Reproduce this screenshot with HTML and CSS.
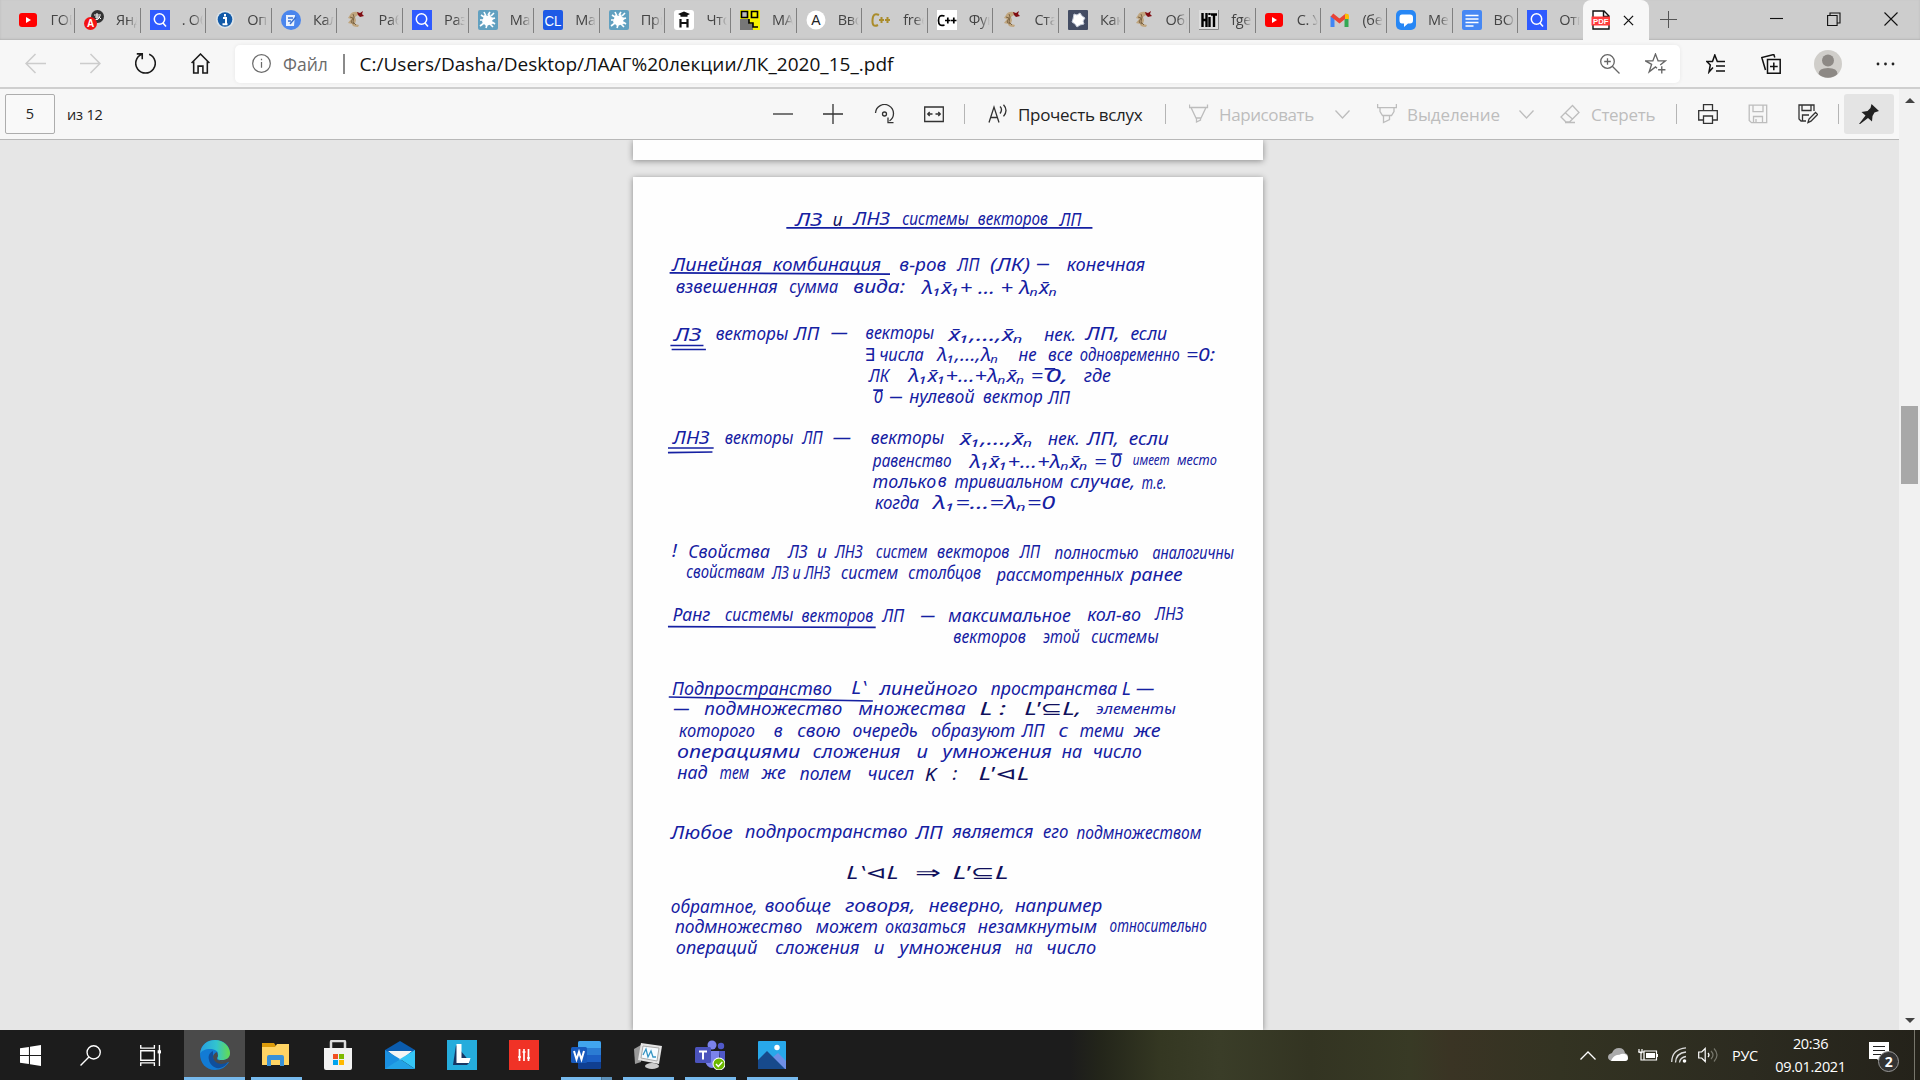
FILE: index.html
```html
<!DOCTYPE html>
<html lang="ru">
<head>
<meta charset="utf-8">
<title>ЛК_2020_15_.pdf</title>
<link rel="stylesheet" href="styles.css">
</head>
<body>
<svg class="defs" aria-hidden="true">
  <symbol id="yt" viewBox="0 0 20 20"><rect x="0" y="3" width="18" height="14" rx="3" fill="#f00"/><path d="M7 7l5 3-5 3z" fill="#fff"/></symbol>
  <symbol id="q" viewBox="0 0 20 20"><path fill="#2f5bff" d="M0 0h20v20H0z"/><circle cx="9.5" cy="9" r="5.2" fill="none" stroke="#fff" stroke-width="1.5"/><path d="M13 13l3 3.5" stroke="#fff" stroke-width="1.5"/></symbol>
  <symbol id="horse" viewBox="0 0 20 20"><path d="M12 2Q6 1 4 5L2 8l3 1-3 4 4 1q0 3 6 3l1-2-4-1 1-4-1-3 3-2z" fill="#c0a67f"/><path d="M4 7l3 1-2 4 3 2M7 4l1 3-1 5 3 3" fill="none" stroke="#7d6544"/><path d="M11 2l3 1 3-2-1 3 2 2-4 1-2-2z" fill="#800d12"/></symbol>
  <symbol id="splat" viewBox="0 0 20 20"><rect width="20" height="20" rx="2" fill="#61a0c0"/><path d="M10 5l2-3M13 6l3-3M14 9l3-1M14 12l3 2M12 14l3 3M9 15l-1 3M6 13l-4 3M6 10H2M6 7L3 5M8 6L6 2" stroke="#fff" stroke-width="1.6"/><path d="M6 5l3 1 3-2 1 3 3 1-2 3 1 3-4 1-3 1-2-2-2-2 1-3z" fill="#fff"/></symbol>
</svg>

<header class="tabs">
  <div class="tab"><svg><use href="#yt"/></svg><span>ГОВ</span></div>
  <div class="tab"><svg viewBox="0 0 20 20"><circle cx="13.500" cy="6.500" r="6.500" fill="#333"/><path d="M10 5h7M13 3v7M16 6q-1 4-5 4M11 7q5-1 6 2" stroke="#fff" fill="none"/><circle cx="6.500" cy="13.500" r="6.500" fill="#f31212"/><text x="3" y="17.300" class="ico-b" fill="#fff">A</text></svg><span>Янде</span></div>
  <div class="tab"><svg><use href="#q"/></svg><span>. Об</span></div>
  <div class="tab"><svg viewBox="0 0 20 20"><circle cx="10" cy="9.500" r="9" fill="#dce4ea"/><circle cx="10" cy="9.500" r="7.300" fill="#125aa8"/><path d="M8 8h3v6M7.500 14.300h5M10 4v2.500" stroke="#fff" stroke-width="2" fill="none"/></svg><span>Опр</span></div>
  <div class="tab"><svg viewBox="0 0 20 20"><circle cx="10" cy="10" r="10" fill="#4b86ed"/><path d="M5 5h9l-1 11H5z" fill="#eaf2ff"/><path d="M7 8h5M7 11h3m-1 3l6-7" stroke="#3a70cf" stroke-width="1.500"/></svg><span>Каль</span></div>
  <div class="tab"><svg><use href="#horse"/></svg><span>Рабо</span></div>
  <div class="tab"><svg><use href="#q"/></svg><span>Разл</span></div>
  <div class="tab"><svg><use href="#splat"/></svg><span>Мат</span></div>
  <div class="tab"><svg viewBox="0 0 20 20"><rect width="20" height="20" rx="2" fill="#1e5ae6"/><text x="1.500" y="15.500" class="ico-cl" textLength="17" lengthAdjust="spacingAndGlyphs" fill="#fff">CL</text></svg><span>Мат</span></div>
  <div class="tab"><svg><use href="#splat"/></svg><span>При</span></div>
  <div class="tab"><svg viewBox="0 0 20 20"><rect width="20" height="20" rx="3" fill="#fff"/><path d="M4 4l6-2.500L16 4l-2.500 1.200v1.600h-7V5.200z" fill="#111"/><path d="M6.500 9v8.500M13.500 9v8.500M6.500 13h7" stroke="#111" stroke-width="2.200"/></svg><span>Что</span></div>
  <div class="tab"><svg viewBox="0 0 20 20"><path fill="#f7f200" d="M0 0h20v20H0z"/><path fill="#777" d="M0 9h9v5h4v6H0z"/><path d="M1.500 1.500h6v6h-6z" fill="#bbb"/><path d="M1.500 1.500h6v6h-6zM11.500 1.500h6v6h-6zM9 9v4h4v4h5" fill="none" stroke="#000" stroke-width="1.600"/></svg><span>МАТ</span></div>
  <div class="tab"><svg viewBox="0 0 20 20"><circle cx="10" cy="10" r="9.500" fill="#fff"/><text x="5.200" y="15" class="ico-a" fill="#222">A</text></svg><span>Вво</span></div>
  <div class="tab"><svg viewBox="0 0 20 20"><path d="M8 5Q2 2 1.500 10T7 15M8 10h5M10.500 7v6M14 10h5M16.500 7v6" fill="none" stroke="#aa8c2b" stroke-width="2"/></svg><span>free</span></div>
  <div class="tab"><svg viewBox="0 0 20 20"><path fill="#fff" d="M0 0h20v20H0z"/><path d="M7.500 6Q1.500 4 1.500 10.500T7.500 15M8 10.500h5.500M10.800 7.500v6M14 10.500h5.500M16.800 7.500v6" fill="none" stroke="#000" stroke-width="1.700"/></svg><span>Фун</span></div>
  <div class="tab"><svg><use href="#horse"/></svg><span>Стат</span></div>
  <div class="tab"><svg viewBox="0 0 20 20"><rect width="20" height="20" rx="1" fill="#434c63"/><path d="M6 4l3 1 3-2 2 3 3 2-2 3 1 3-4 1-3 2-2-3-3-2 1-3z" fill="#fff" stroke="#c3cad8"/></svg><span>Как</span></div>
  <div class="tab"><svg><use href="#horse"/></svg><span>Обр</span></div>
  <div class="tab"><svg viewBox="0 0 20 20"><path fill="#ddd" d="M0 0h20v20H0z"/><path d="M19.500 0v19.500H0" fill="none" stroke="#888"/><path d="M3.500 3v14M7.500 3v14M3 10h5M10.500 7v10M10.500 3v2M12 4.500h6M15 4v13" fill="none" stroke="#000" stroke-width="2.400"/></svg><span>fget</span></div>
  <div class="tab"><svg><use href="#yt"/></svg><span>С. У</span></div>
  <div class="tab"><svg viewBox="0 0 20 20"><path d="M2.500 17V6" stroke="#4285f4" stroke-width="4"/><path d="M16.500 17V6" stroke="#34a853" stroke-width="4"/><path d="M2 5l7.500 6L17 5" fill="none" stroke="#ea4335" stroke-width="4"/><path d="M15 4q4-1 4 2v3h-4z" fill="#fbbc04"/></svg><span>(без</span></div>
  <div class="tab"><svg viewBox="0 0 20 20"><rect width="20" height="20" rx="5" fill="#2787f5"/><path d="M6 4.500h8q3 0 3 3v3q0 3-3 3h-2L8 17v-3.500H6q-2.500 0-2.500-3v-3q0-3 2.500-3z" fill="#fff"/></svg><span>Мес</span></div>
  <div class="tab"><svg viewBox="0 0 20 20"><rect width="20" height="20" rx="2" fill="#4688f4"/><path d="M3.500 5.500h13M3.500 9h13M3.500 12.500h13M3.500 16h8" stroke="#fff" stroke-width="1.700"/></svg><span>ВОП</span></div>
  <div class="tab last"><svg><use href="#q"/></svg><span>Отп</span></div>
  <div class="tab-active">
    <svg class="pdf" viewBox="0 0 20 20"><path d="M2 1h11l5 5v13H2zM12.500 1v5.500H18" fill="#fff" stroke="#111" stroke-width="1.400"/><path d="M.5 6.500h18.500v9H.5z" fill="#ff3b3b"/><text x="2" y="14" class="ico-pdf" textLength="15.500" lengthAdjust="spacingAndGlyphs" fill="#fff">PDF</text></svg>
    <svg class="x" viewBox="0 0 12 12"><path d="M1 1l10 10M11 1L1 11"/></svg>
  </div>
  <svg class="plus" viewBox="0 0 17 17"><path d="M8.500 0v17M0 8.500h17"/></svg>
  <div class="win">
    <svg viewBox="0 0 14 14"><path d="M0 6.500h13"/></svg>
    <svg viewBox="0 0 14 14"><path d="M.6 3.500h9.500v10H.6zM3 3.500V1h10v10h-2.500"/></svg>
    <svg viewBox="0 0 14 14"><path d="M.5.5l13 13M13.500.5l-13 13"/></svg>
  </div>
</header>

<nav class="address">
  <svg class="nav-i off" viewBox="0 0 20 20"><path d="M20 10H1M10 1l-9 9 9 9"/></svg>
  <svg class="nav-i off" viewBox="0 0 20 20"><path d="M0 10h19M10 1l9 9-9 9"/></svg>
  <svg class="nav-i" viewBox="0 0 20 20"><path d="M13.500 1.200a9.300 9.300 0 1 1-7 0M1.700.8h5.200V6"/></svg>
  <svg class="nav-i" viewBox="0 0 20 20"><path d="M1.500 9.500L10 1l8.500 8.500M3.500 8v11h4.200v-6.500h4.600V19h4.200V8"/></svg>
  <div class="omnibox">
    <svg class="info" viewBox="0 0 20 20"><circle cx="10" cy="10" r="9.300"/><path d="M10 8.500v6M10 5v1.700"/></svg>
    <span class="kind">Файл</span><i></i><span class="url">C:/Users/Dasha/Desktop/ЛААГ%20лекции/ЛК_2020_15_.pdf</span>
    <svg class="ob" viewBox="0 0 20 20"><circle cx="7.500" cy="7.500" r="6.800"/><path d="M12.300 12.300l7.200 7.200M7.500 4.200v6.600M4.200 7.500h6.600"/></svg>
    <svg class="ob star" viewBox="0 0 20 20"><path d="M11 14.500l-1.500-1.200-6 4.700 2.300-7.200L0 7.500h7L9.500 1 12 7.500h7l-5 4M15.500 12.500v7M12 16h7"/></svg>
  </div>
  <svg class="ri" viewBox="0 0 20 20"><path d="M7 13.500L3 18l1.300-7L.8 7.500h5.700L8.800 1l2.500 6.500H19M10 12h9M10 17h9"/></svg>
  <svg class="ri" viewBox="0 0 20 20"><path d="M6.500 5.500h12.700v13.700H6.500zM12.800 8.500v7.700M9 12.400h7.700M4.500 16L.8 3.500l12-3 1 3"/></svg>
  <svg class="avatar" viewBox="0 0 28 28"><circle cx="14" cy="14" r="14" fill="#d0ceca"/><circle cx="14" cy="10.500" r="6" fill="#8d8985"/><path d="M4.500 24q0-6 9.500-6t9.500 6a14 14 0 0 1-19 0" fill="#8d8985"/></svg>
  <svg class="dots" viewBox="0 0 19 4"><circle cx="2" cy="2" r="1.400"/><circle cx="9.500" cy="2" r="1.400"/><circle cx="17" cy="2" r="1.400"/></svg>
</nav>

<div class="body">
  <div class="main">
    <div class="toolbar">
      <div class="page-no">5</div><span class="total">из 12</span>
      <svg class="minus" viewBox="0 0 20 20"><path d="M0 10h20"/></svg>
      <svg class="zin" viewBox="0 0 20 20"><path d="M0 10h20M10 0v20"/></svg>
      <svg class="rot" viewBox="0 0 20 20"><path d="M1 9a9 9 0 1 1 14 8M13.500 13.500v5.200h5.500"/><circle cx="10" cy="10" r="2"/></svg>
      <svg class="fit" viewBox="0 0 20 20"><path d="M.7 3h18.600v14.500H.7zM.7 3h18.600M3.500 10h5M11.500 10h5M5.700 8l-2 2 2 2M14.300 8l2 2-2 2"/></svg>
      <i class="s1"></i>
      <svg class="read" viewBox="0 0 20 20"><path d="M1 18.500L6 3l5 15.500M2.800 13.500h6.500M12 2.500q3 3 0 7M15.500.8q5 5.500 0 11.500"/></svg>
      <span class="t-read">Прочесть вслух</span>
      <i class="s2"></i>
      <svg class="pen off" viewBox="0 0 20 20"><path d="M.5.500v3h18v-3M2 3.500l5 10.500h5l5-10.500M7.500 14v4l4-2v-2"/></svg>
      <span class="t-draw">Нарисовать</span>
      <svg class="chev off" viewBox="0 0 15 9"><path d="M.5.500l7 7.500 7-7.500"/></svg>
      <svg class="mark off" viewBox="0 0 20 20"><path d="M.6 0v3.700h18.800V0M3 4v3.500l2.500 4h9l2.500-4V4M6.500 12v6.500l6-3V12"/></svg>
      <span class="t-mark">Выделение</span>
      <svg class="chev c2 off" viewBox="0 0 15 9"><path d="M.5.500l7 7.500 7-7.500"/></svg>
      <svg class="erase off" viewBox="0 0 20 20"><path d="M12.500 1.500l6.500 7L9.500 18H6l-5-5zM5 8.500l8 7M5 18.500h10"/></svg>
      <span class="t-erase">Стереть</span>
      <i class="s3"></i>
      <svg class="print" viewBox="0 0 20 20"><path d="M5.500 6.500V.7h9v5.800M5.500 16H.7V6.700h18.600V16h-4.800M5.500 12h9v7.300h-9z"/></svg>
      <svg class="save off" viewBox="0 0 20 20"><path d="M1.200 1.200h17.500v17.500H3.500l-2.300-2.300zM5 1.200v6.500h10V1.200M5.500 18.500v-6h9v6M8 15v3.500"/></svg>
      <svg class="saveas" viewBox="0 0 20 20"><path d="M16 7V1H1v14l2 2h5M4 1v5.500h9V1M4.500 17v-6H11M10 18.500l1-3.500 6.500-6.500 2 2-6.500 6.700z"/></svg>
      <i class="s4"></i>
      <div class="pin"><svg viewBox="0 0 20 20"><path d="M12.500 0L20 7l-4.500 1.500-2 3.500-.5 5.500-4-3.500L.5 20.500 0 20l6.500-8.500L2.500 8l6-1 3-3z" fill="#222"/></svg></div>
    </div>
    <div class="viewer">
      <div class="sheet prev"></div>
      <div class="sheet"><svg class="notes" id="notes" viewBox="0 0 630 853"></svg></div>
    </div>
  </div>
  <div class="scroll"><b class="up"></b><div class="thumb"></div><b class="down"></b></div>
</div>

<footer class="taskbar">
  <div class="task"><svg class="start" viewBox="0 0 20 20"><path d="M0 3l8.500-1.200v7.700H0zM9.500 1.600L20 0v9.500H9.500zM0 10.500h8.500v7.700L0 17zM9.500 10.500H20V20L9.500 18.400z" fill="#fff"/></svg></div>
  <div class="task"><svg class="line" viewBox="0 0 20 20"><circle cx="13" cy="7" r="6.300"/><path d="M8.500 11.500L.5 19.500"/></svg></div>
  <div class="task"><svg class="line" viewBox="0 0 20 20"><path d="M.7 0v3h13V0M.7 20v-3h13v3M.7 5.500h13v9H.7zM18.500 0v20"/><path d="M16.800 5h3.200v3h-3.200z" fill="#fff" stroke="none"/></svg></div>
  <div class="task active"><svg class="big" viewBox="0 0 30 30"><defs><linearGradient id="eg"><stop offset="0" stop-color="#279fe0"/><stop offset=".55" stop-color="#32c4cf"/><stop offset="1" stop-color="#66dc4c"/></linearGradient></defs><path d="M0 14C1 5 7 0 15 0c9 0 15 6 15 13 0 4-3 7-8 7-4 0-6-1-5-3 1 3 4 6 12 5-3 5-8 8-14 8C6 30 0 23 0 14z" fill="#127bd4"/><path d="M0 14C1 4 8 0 15 0c9 0 15 7 15 13 0 5-4 7-8 7-5 0-5-2-4-4 1-5-3-7-8-7-5 0-9 2-10 5z" fill="url(#eg)"/><path d="M13 11c-4 2-5 5-4 9 1 5 6 9 11 8 4-1 7-4 8-6-7 3-14 1-15-6z" fill="#104f9c"/><path d="M17 12q-4 2-4 5 1 6 8 7 4 0 7-2-6 0-10-2-2-1 0-4z" fill="#4a4a4a"/></svg></div>
  <div class="task run"><svg class="big" viewBox="0 0 30 30"><path d="M1 3h12l2 3v5H1z" fill="#dc9b0a"/><path d="M1 7h13l2-3h12v21H1z" fill="#ffd464"/><path d="M6 26V17q0-2 2-2h13q2 0 2 2v9h-4v-6h-9v6z" fill="#3991d7"/></svg></div>
  <div class="task"><svg class="big" viewBox="0 0 30 30"><path d="M8 12V2q0-1 1-1h12q1 0 1 1v10" fill="none" stroke="#ddd" stroke-width="2.500"/><path d="M1 8h28v20q0 2-2 2H3q-2 0-2-2z" fill="#f2f2f2"/><path d="M10 14h5v5h-5z" fill="#f25022"/><path d="M16 14h5v5h-5z" fill="#7fba00"/><path d="M10 20h5v5h-5z" fill="#00a4ef"/><path d="M16 20h5v5h-5z" fill="#ffb900"/></svg></div>
  <div class="task"><svg class="big" viewBox="0 0 30 30"><path d="M0 10L15 1l15 9v5H0z" fill="#0b5cae"/><path d="M3 11h24L15 21z" fill="#f4f4f4"/><path d="M0 10l15 9-12 10H0z" fill="#1a8fe0"/><path d="M30 10L15 19l15 10z" fill="#35c6f6"/><path d="M15 19l15 10H0z" fill="#23a2e6"/></svg></div>
  <div class="task"><svg class="big" viewBox="0 0 30 30"><path fill="#25acdc" d="M0 0h30v30H0z"/><path d="M9 5L6 25h14l3-3z" fill="#173663"/><path d="M9.500 4h5v14h9l-1.500 5H9.500z" fill="#fff"/></svg></div>
  <div class="task"><svg class="big" viewBox="0 0 30 30"><path fill="#f03226" d="M0 0h30v30H0z"/><path d="M10.500 9v12M15 9v12M19.500 9v12M9 17h3M13.500 12h3M18 18h3" stroke="#fff" stroke-width="1.700"/></svg></div>
  <div class="task run multi"><svg class="big" viewBox="0 0 30 30"><rect x="7" y="1" width="23" height="28" rx="2" fill="#1c5fc4"/><path d="M7 3q0-2 2-2h19q2 0 2 2v5H7z" fill="#41a5ee"/><path d="M7 8h23v7H7z" fill="#2b7cd3"/><path d="M7 22h23v5q0 2-2 2H9q-2 0-2-2z" fill="#103f91"/><rect x="0" y="7" width="16" height="16" rx="1.500" fill="#185abd"/><path d="M3 11l2.500 8.500L8 12l2.500 7.500L13 11" fill="none" stroke="#fff" stroke-width="2"/></svg></div>
  <div class="task run"><svg class="big" viewBox="0 0 30 30"><path d="M1 9l7-4v17l-6 2z" fill="#999"/><path d="M8 3l21 3-3 18L5 20z" fill="#e4e4e4"/><path d="M10 6l16 2-2 13-16-3z" fill="#f6fbff" stroke="#aaa"/><path d="M10 15l3-6 2 8 3-6 2 6h3" fill="none" stroke="#3695c4" stroke-width="1.300"/><ellipse cx="19" cy="26" rx="7" ry="3" fill="#ccc"/></svg></div>
  <div class="task run"><svg class="big" viewBox="0 0 30 30"><circle cx="17" cy="5" r="4.500" fill="#7b83eb"/><circle cx="26" cy="6" r="3.200" fill="#5059c9"/><path d="M11 11h13v10q-2 7-7 7t-7-7z" fill="#7b83eb"/><path d="M24 11h6v8q0 4-5 4z" fill="#5059c9"/><rect y="7" width="16" height="16" rx="1.500" fill="#4b53bc"/><path d="M4 11.500h8M8 11.500v8" stroke="#fff" stroke-width="2"/><circle cx="24" cy="24" r="6.500" fill="#fff"/><circle cx="24" cy="24" r="5.500" fill="#6bb700"/><path d="M21 24l2.300 2.500 4-4.500" fill="none" stroke="#fff" stroke-width="1.500"/></svg></div>
  <div class="task run"><svg class="big" viewBox="0 0 30 30"><rect x="1" y="1" width="28" height="28" rx="1" fill="#28a8ea"/><path d="M14 19l7-6 8 8v8H14z" fill="#6e8fe6"/><path d="M1 20l9-9 18 18H1z" fill="#174a8c"/><circle cx="20" cy="7.500" r="2.700" fill="#fff"/></svg></div>
  <div class="tray">
    <svg class="t1" viewBox="0 0 16 9"><path d="M.5 8.500L8 1l7.500 7.500" fill="none" stroke="#fff" stroke-width="1.300"/></svg>
    <svg class="t2" viewBox="0 0 20 14"><path d="M4 13q-4-1-4-4t4-4q2-5 7-5t6 5q3 1 3 4t-3 4z" fill="#aaa"/><path d="M3 13q2-5 6-6 3 0 4-1 6-1 7 4 0 3-3 3z" fill="#fff"/></svg>
    <svg class="t3" viewBox="0 0 20 14"><path d="M6 3h12.500v9H6zM19.500 6v3M1 1v3q3 2 3 0V1M0 4h6M3 5v7h3" fill="none" stroke="#fff" stroke-width="1.200"/><path d="M8 5h9v5H8z" fill="#fff"/></svg>
    <svg class="t4" viewBox="0 0 16 16"><path d="M.7 15Q1 2 15 .8M4.500 15.500Q5 6 15 5M8.500 15.500q.5-5 6.500-6" fill="none" stroke="#ddd" stroke-width="1.300"/><circle cx="13.500" cy="14" r="1.800" fill="#fff"/></svg>
    <svg class="t5" viewBox="0 0 20 16"><path d="M.7 5h3l3.500-3.500v13L3.700 11h-3zM10 6q2 2 0 4" fill="none" stroke="#fff" stroke-width="1.200"/><path d="M13 4q4 4 0 8M16 1.500q6 6.500 0 13" fill="none" stroke="#77776c" stroke-width="1.200"/></svg>
    <span class="lang">РУС</span>
    <div class="clock"><span>20:36</span><span>09.01.2021</span></div>
    <svg class="notif" viewBox="0 0 30 32"><path d="M0 0h20v17h-8v4l-4-4H0z" fill="#fff"/><path d="M4 4.500h12M4 8.500h12M4 12.500h8" stroke="#222" stroke-width="1.200"/><circle cx="19.500" cy="19.500" r="10" fill="#333" stroke="#999"/><text x="15.700" y="25" class="ico-n" fill="#fff">2</text></svg>
    <i class="edge"></i>
  </div>
</footer>
<script src="notes.js"></script>
</body>
</html>
```
FILE: notes.js
```js
// Handwritten page. Each word is [x, baseline, width, text, class]; rules are path data.
// Every block has its own vertical offset on the sheet.
const blocks = [
  { top: -45.5, words: [
    [405,283,66,"ЛЗ"],[497,283,24,"и","dark"],[547,282,90,"ЛНЗ"],[667,280,163,"системы"],[852,282,172,"векторов"],[1052,283,54,"ЛП"],
    [103,418,220,"Линейная"],[350,418,265,"комбинация"],[660,418,115,"в-ров"],[802,418,54,"ЛП"],[882,420,98,"(ЛК)"],[996,416,32,"—"],[1070,418,192,"конечная"],
    [112,485,250,"взвешенная"],[390,484,120,"сумма"],[547,485,127,"вида:"],[715,487,333,"λ₁x̄₁+ … + λₙx̄ₙ"],
    [107,628,68,"ЛЗ"],[210,625,178,"векторы"],[402,626,62,"ЛП"],[492,624,42,"—"],[577,624,168,"векторы"],[780,628,184,"x̄₁,…,x̄ₙ"],[1015,628,78,"нек."],[1116,627,84,"ЛП,"],[1226,627,90,"если"],
    [575,689,145,"∃ числа"],[752,689,152,"λ₁,…,λₙ"],[952,689,44,"не"],[1024,689,60,"все"],[1102,689,245,"одновременно"],[1362,688,72,"=0:"],
    [585,751,50,"ЛК"],[682,752,330,"λ₁x̄₁+…+λₙx̄ₙ ="],[1018,751,56,"0,"],[1112,753,66,"где"],
    [597,815,22,"0"],[636,816,32,"—"],[684,814,160,"нулевой"],[865,814,146,"вектор"],[1024,818,54,"ЛП"]
  ], rules: "M383 289H1133M97 424L637 428M99 642H180M102 654H186M1016 712H1042M596 776H620" },
  { top: 244, words: [
    [105,70,90,"ЛНЗ"],[232,70,168,"векторы"],[422,69,50,"ЛП"],[497,70,45,"—"],[590,70,180,"векторы"],[808,72,180,"x̄₁,…,x̄ₙ"],[1024,73,78,"нек."],[1120,73,78,"ЛП,"],[1222,73,98,"если"],
    [595,138,193,"равенство"],[832,140,336,"λ₁x̄₁+…+λₙx̄ₙ ="],[1180,137,24,"0"],[1232,131,90,"имеет","small"],[1340,131,98,"место","small"],
    [595,200,155,"только"],[754,198,22,"в"],[795,202,266,"тривиальном"],[1078,202,160,"случае,"],[1254,203,60,"т.е."],
    [600,264,108,"когда"],[742,264,300,"λ₁=…=λₙ=0"],
    [103,408,12,"!"],[143,410,200,"Свойства"],[387,410,48,"ЛЗ"],[458,410,24,"и"],[502,410,68,"ЛНЗ"],[603,410,126,"систем"],[752,410,178,"векторов"],[955,412,50,"ЛП"],[1040,413,206,"полностью"],[1280,413,200,"аналогичны"],
    [138,472,192,"свойствам"],[348,473,143,"ЛЗ и ЛНЗ"],[517,474,140,"систем"],[682,474,178,"столбцов"],[898,479,310,"рассмотренных"],[1226,481,128,"ранее"],
    [105,600,92,"Ранг"],[233,600,167,"системы"],[420,602,176,"векторов"],[618,602,54,"ЛП"],[712,602,36,"—"],[780,602,300,"максимальное"],[1120,600,132,"кол-во"],[1286,598,70,"ЛНЗ"],
    [792,666,178,"векторов"],[1012,666,90,"этой"],[1130,666,165,"системы"]
  ], rules: "M93 81H205M93 95L202 93M93 617L602 619M1178 99H1206" },
  { top: 484, words: [
    [103,103,392,"Подпространство"],[542,100,38,"L‵"],[612,102,240,"линейного"],[884,102,310,"пространства"],[1205,102,80,"L —"],
    [106,162,40,"—"],[182,163,338,"подмножество"],[560,163,262,"множества"],[856,163,66,"L :","dark"],[966,161,140,"L'⊆L,","dark"],[1142,160,195,"элементы","small"],
    [120,227,186,"которого"],[352,227,22,"в"],[410,227,106,"свою"],[545,227,160,"очередь"],[738,227,206,"образуют"],[960,227,56,"ЛП"],[1050,227,24,"с"],[1102,227,108,"теми"],[1234,227,66,"же"],
    [115,291,302,"операциями"],[448,292,214,"сложения"],[702,292,28,"и"],[765,292,268,"умножения"],[1058,292,50,"на"],[1134,292,120,"число"],
    [116,354,74,"над"],[220,354,72,"тем"],[322,355,60,"же"],[416,356,126,"полем"],[582,357,114,"чисел"],[722,359,28,"K","dark"],[790,356,12,":","dark"],[854,356,124,"L'⊲L","dark"],
    [100,534,152,"Любое"],[282,532,398,"подпространство"],[700,533,66,"ЛП"],[790,532,198,"является"],[1012,532,62,"его"],[1094,533,306,"подмножеством"],
    [530,653,128,"L‵⊲L","dark"],[698,653,64,"⇒","dark"],[790,653,138,"L'⊆L","dark"],
    [100,756,212,"обратное,"],[330,754,162,"вообще"],[527,754,172,"говоря,"],[732,754,186,"неверно,"],[943,754,214,"например"],
    [110,816,312,"подмножество"],[455,816,152,"может"],[625,816,198,"оказаться"],[852,816,292,"незамкнутым"],[1175,814,238,"относительно"],
    [112,880,200,"операций"],[356,880,206,"сложения"],[597,880,26,"и"],[660,880,250,"умножения"],[944,880,42,"на"],[1020,880,122,"число"]
  ], rules: "M95 108L595 120" }
];

const NS = "http://www.w3.org/2000/svg";
const make = (name, attrs, parent) => {
  const el = document.createElementNS(NS, name);
  for (const key in attrs) el.setAttribute(key, attrs[key]);
  parent.appendChild(el);
  return el;
};

const notes = document.getElementById("notes");
for (const block of blocks) {
  const g = make("g", { transform: `translate(-3 ${block.top}) scale(.40816 .33333)` }, notes);
  for (const [x, y, width, text, cls] of block.words) {
    make("text", { x, y, textLength: width, lengthAdjust: "spacingAndGlyphs", class: cls || "ink" }, g).textContent = text;
  }
  make("path", { d: block.rules }, g);
}
```
FILE: styles.css
```css
* { box-sizing: border-box; }
body { margin: 0; width: 1920px; height: 1080px; overflow: hidden; display: flex; flex-direction: column; background: #f7f7f7; font-family: "Open Sans", "Noto Sans", sans-serif; color: #222; }
.defs { display: none; }
svg { flex: none; display: block; fill: none; }

.tabs { height: 40px; flex: none; display: flex; background: #cdcdcd; padding-left: 9.5px; box-shadow: inset 0 -1px 2px #b5b5b5; }
.tab { width: 65.600px; flex: none; display: flex; align-items: center; padding-left: 9px; position: relative; }
.tab::after { content: ""; position: absolute; right: 0; top: 8px; width: 1px; height: 25px; background: #808080; }
.tab.last::after { display: none; }
.tab svg { width: 20px; height: 20px; }
.tab span { margin-left: 12px; width: 21px; overflow: hidden; white-space: nowrap; font-size: 14.500px; line-height: 24px; letter-spacing: -.3px; color: #444; -webkit-mask-image: linear-gradient(90deg, #000 55%, transparent); mask-image: linear-gradient(90deg, #000 55%, transparent); }
.tab-active { width: 66px; margin-left: -1px; background: #f7f7f7; border-radius: 8px 8px 0 0; display: flex; align-items: center; padding-left: 8px; flex: none; }
.pdf { width: 20px; height: 20px; }
.x { width: 11px; height: 11px; margin-left: 12px; stroke: #111; stroke-width: 1.400; }
.plus { width: 17px; height: 17px; margin: 11px 0 0 11px; stroke: #555; }
.win { margin: 12px 22px 0 auto; display: flex; gap: 43px; }
.win svg { width: 14px; height: 14px; stroke: #111; stroke-width: 1.100; }
.ico-b { font: bold 10px "Liberation Sans", sans-serif; }
.ico-cl { font: 15px "Liberation Sans", sans-serif; }
.ico-a { font: 14px "Liberation Sans", sans-serif; }
.ico-pdf { font: bold 7.500px "Liberation Sans", sans-serif; }
.ico-n { font: bold 14px "Open Sans", sans-serif; }

.address { height: 49px; flex: none; border-bottom: 2px solid #cfcfcf; display: flex; align-items: center; padding-left: 25px; }
.nav-i { width: 21px; height: 21px; margin-right: 34px; stroke: #1a1a1a; stroke-width: 1.500; }
.nav-i.off { stroke: #ccc; }
.omnibox { width: 1445px; height: 38px; margin-left: -10px; background: #fff; border-radius: 5px; box-shadow: 0 0 4px #0001; display: flex; align-items: center; padding-left: 17px; }
.info { width: 19px; height: 19px; stroke: #6b6b6b; stroke-width: 1.300; }
.kind { margin-left: 12px; width: 49px; font-size: 17.500px; color: #6b6b6b; }
.omnibox i { width: 1.500px; height: 20px; margin: 0 15px 0 11px; background: #8a8a8a; }
.url { font-size: 19px; color: #111; white-space: nowrap; width: 534px; letter-spacing: .02px; }
.ob { width: 20px; height: 20px; margin-left: 706px; stroke: #666; stroke-width: 1.300; }
.ob.star { width: 22px; height: 21px; margin-left: 25px; }
.ri { width: 20px; height: 20px; margin-left: 26px; stroke: #111; stroke-width: 1.500; }
.ri + .ri { margin-left: 35px; }
.avatar { width: 28px; height: 28px; margin-left: 33px; }
.dots { width: 19px; height: 4px; margin-left: 34px; fill: #222; }

.body { height: 941px; flex: none; display: flex; }
.main { width: 1899px; flex: none; display: flex; flex-direction: column; }
.toolbar { height: 51px; flex: none; background: #f7f7f7; border-bottom: 1px solid #b8b8b8; display: flex; align-items: center; padding-left: 5px; font-size: 17px; white-space: nowrap; }
.toolbar svg { width: 20px; height: 20px; stroke: #333; stroke-width: 1.300; }
.toolbar svg.off { stroke: #bdbdbd; }
.toolbar i { width: 1px; height: 20px; background: #b5b5b5; }
.toolbar span { flex: none; }
.page-no { width: 50px; height: 40px; border: 1px solid #adadad; border-radius: 2px; text-align: center; line-height: 38px; font-size: 14.500px; background: #f9f9f9; }
.total { width: 36px; margin-left: 12px; font-size: 14.500px; letter-spacing: -.2px; }
.toolbar .minus { margin-left: 670px; }
.toolbar .zin { margin-left: 30px; }
.toolbar .rot { margin-left: 31px; width: 21px; }
.toolbar .fit { margin-left: 29px; }
.s1 { margin-left: 20px; }
.toolbar .read { margin-left: 23px; }
.t-read { margin-left: 10px; width: 125px; letter-spacing: -.3px; padding-top: 1px; }
.s2 { margin-left: 22px; }
.toolbar .pen { margin-left: 23px; }
.t-draw { margin-left: 10px; width: 94px; letter-spacing: -.4px; }
.t-draw, .t-mark, .t-erase { color: #bdbdbd; padding-top: 1px; }
.toolbar .chev { width: 15px; height: 9px; margin-left: 22px; }
.toolbar .mark { margin-left: 27px; }
.t-mark { margin-left: 10px; width: 89px; letter-spacing: -.1px; }
.toolbar .chev.c2 { margin-left: 23px; }
.toolbar .erase { margin-left: 26px; }
.t-erase { margin-left: 11px; width: 63px; letter-spacing: -.3px; }
.s3 { margin-left: 22px; }
.toolbar .print { margin-left: 21px; }
.toolbar .save { margin-left: 30px; }
.toolbar .saveas { margin-left: 30px; }
.s4 { margin-left: 20px; }
.pin { width: 50px; height: 40px; margin-left: 5px; background: #e4e4e4; border-radius: 3px; display: flex; align-items: center; justify-content: center; }
.pin svg { stroke: none; }

.viewer { flex: 1; overflow: hidden; background: #e6e6e6; padding-left: 633px; }
.sheet { width: 630px; height: 853px; background: #fefefe; box-shadow: 0 1px 6px #0006; }
.sheet.prev { height: 20px; margin-bottom: 17px; }
.notes { width: 630px; height: 853px; }
.notes text { font: italic 54px "Noto Sans", "Open Sans", "DejaVu Sans", sans-serif; fill: #1520a2; }
.notes text.dark { fill: #10105c; }
.notes text.small { font-size: 46px; }
.notes path { stroke: #1520a2; stroke-width: 5; }

.scroll { width: 21px; background: #f1f1f1; display: flex; flex-direction: column; align-items: center; padding: 9px 0 4px; }
.up { border: 5px solid transparent; border-top: 0; border-bottom-color: #444; }
.thumb { width: 17px; height: 78px; margin: 303px 0 auto; background: #a8a8a8; }
.down { border: 5px solid transparent; border-bottom: 0; border-top-color: #444; margin-bottom: 3px; }

.taskbar { height: 50px; flex: none; display: flex; background: linear-gradient(90deg, #1c1c1c 1070px, #23251a 1100px, #343722 1160px, #3a3d28 1220px, #333422 1310px, #383a25 1410px, #3a3424 1450px, #333322 1560px, #2c2b20 1750px, #24221a); }
.task { width: 62px; flex: none; display: flex; align-items: center; justify-content: center; position: relative; }
.task:nth-child(-n+3) { width: 60px; }
.task:nth-child(3) { width: 64px; padding-right: 4px; }
.task svg { width: 21px; height: 21px; }
.task .line { stroke: #fff; stroke-width: 1.300; }
.task .big { width: 30px; height: 30px; }
.task.active { width: 61px; background: #4a4a4a; }
.task.active::after, .task.run::after { content: ""; position: absolute; bottom: 0; left: 6px; right: 5px; height: 3px; background: #76b9ed; }
.task.active::after { left: 0; right: 0; }
.task.multi::after { background: linear-gradient(90deg, #76b9ed 40px, #39566c 40px, #5b8fb8 41px); }
.tray { margin-left: auto; display: flex; align-items: center; color: #fff; padding-right: 5px; }
.t1 { width: 16px; height: 9px; }
.t2 { width: 20px; height: 14px; margin-left: 12px; }
.t3 { width: 20px; height: 14px; margin-left: 10px; }
.t4 { width: 16px; height: 16px; margin-left: 13px; }
.t5 { width: 20px; height: 16px; margin-left: 11px; }
.lang { margin-left: 14px; width: 27px; font-size: 14.500px; letter-spacing: -.3px; }
.clock { margin-left: 16px; width: 71px; display: flex; flex-direction: column; align-items: center; font-size: 14.500px; line-height: 23px; letter-spacing: -.35px; }
.notif { width: 30px; height: 32px; margin: 5px 0 0 23px; }
.edge { width: 1px; height: 50px; background: #77766c; margin-left: 15px; }
```
